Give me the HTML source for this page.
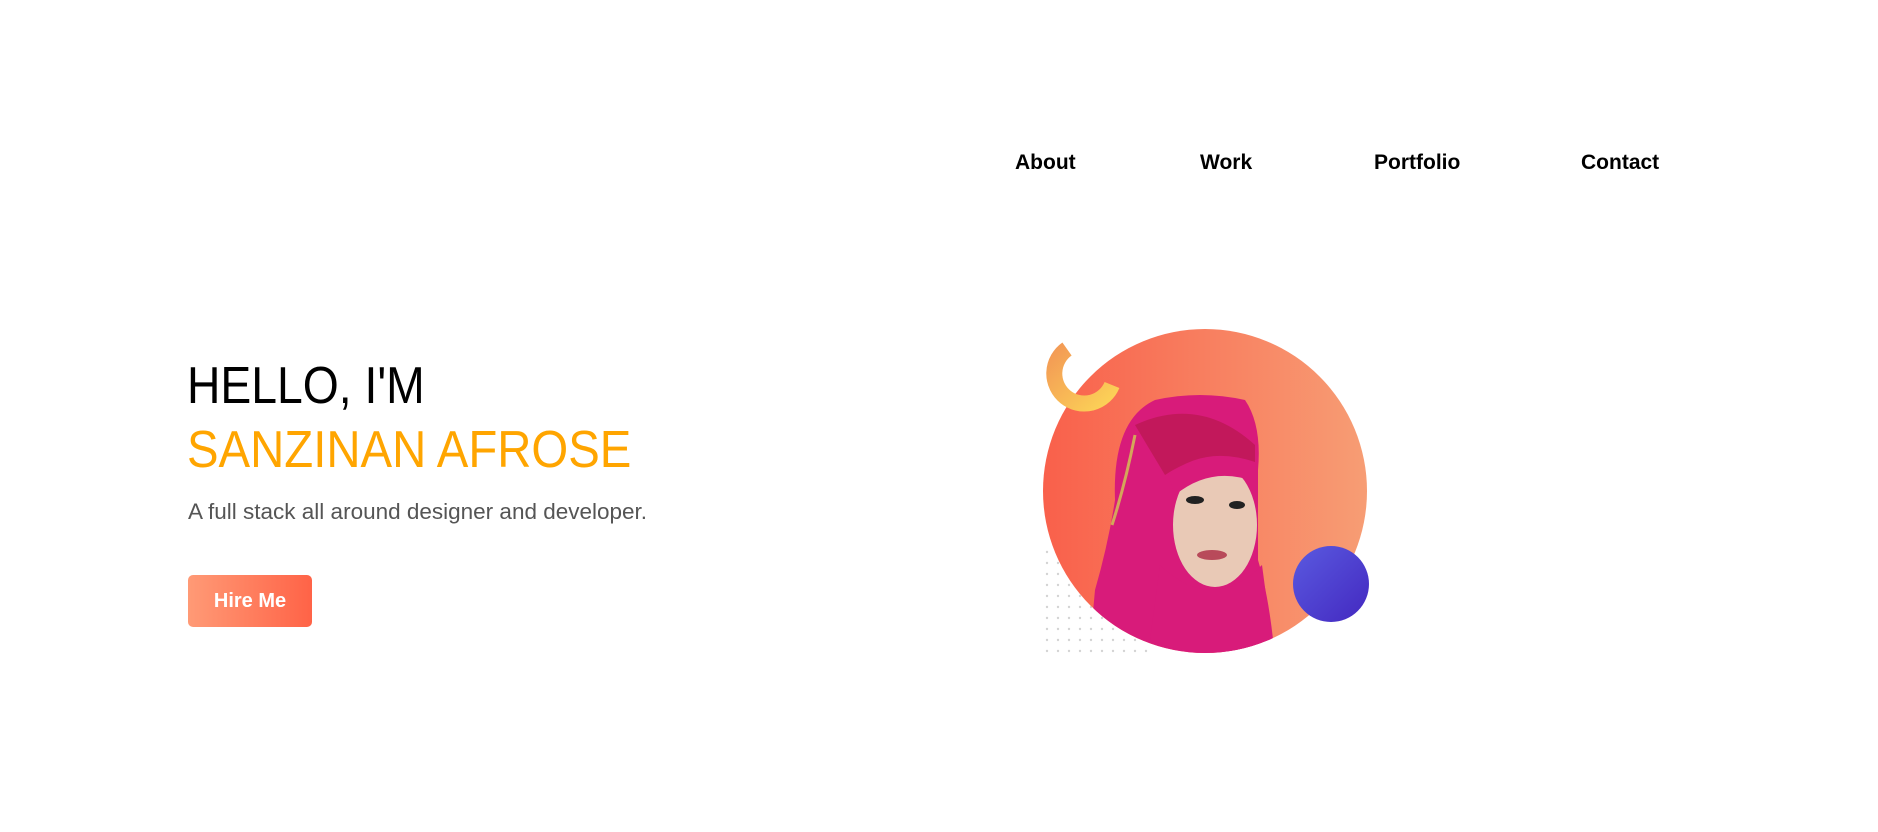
<!DOCTYPE html>
<html><head><meta charset="utf-8"><style>
body{margin:0;width:1878px;height:832px;background:#fff;position:relative;overflow:hidden;font-family:"Liberation Sans",sans-serif}
.a{position:absolute;white-space:nowrap}
.nav{font-size:21px;font-weight:bold;color:#000;top:151px}
</style></head><body>
<div class="a nav" style="left:1015px">About</div>
<div class="a nav" style="left:1200px">Work</div>
<div class="a nav" style="left:1374px">Portfolio</div>
<div class="a nav" style="left:1581px">Contact</div>

<div class="a" style="left:187px;top:356px;font-size:52px;color:#000;transform:scaleX(0.89);transform-origin:0 0">HELLO, I'M</div>
<div class="a" style="left:187px;top:420px;font-size:52px;color:#ffa500;transform:scaleX(0.91);transform-origin:0 0">SANZINAN AFROSE</div>
<div class="a" style="left:188px;top:499px;font-size:22.5px;color:#555">A full stack all around designer and developer.</div>
<div class="a" style="left:188px;top:575px;width:124px;height:52px;border-radius:5px;background:linear-gradient(90deg,#ff9a76,#ff6347);color:#fff;font-weight:bold;font-size:20px;line-height:52px;text-align:center">Hire Me</div>

<svg class="a" style="left:0;top:0" width="1878" height="832">
<defs>
<linearGradient id="g" x1="0" y1="0" x2="1" y2="0"><stop offset="0" stop-color="#f9604b"/><stop offset="1" stop-color="#f79d74"/></linearGradient>
<linearGradient id="b" x1="0" y1="0" x2="1" y2="1"><stop offset="0" stop-color="#5a5ae0"/><stop offset="1" stop-color="#4328c0"/></linearGradient>
<linearGradient id="y" x1="0" y1="0" x2="1" y2="1"><stop offset="0" stop-color="#f39a55"/><stop offset="1" stop-color="#fcd357"/></linearGradient>
<pattern id="d" width="11" height="11" patternUnits="userSpaceOnUse"><circle cx="2" cy="2" r="1.2" fill="#d4d4d4"/></pattern>
<clipPath id="c"><circle cx="1205" cy="491" r="162"/></clipPath>
</defs>
<rect x="1043" y="550" width="110" height="108" fill="url(#d)"/>
<circle cx="1205" cy="491" r="162" fill="url(#g)"/>
<g clip-path="url(#c)">
<path d="M1085 700 L1095 590 Q1108 545 1115 500 Q1112 420 1155 400 Q1200 390 1245 400 Q1262 425 1258 470 L1258 560 Q1270 600 1275 660 L1275 700Z" fill="#d81b7a"/>
<path d="M1135 425 Q1200 395 1255 445 L1255 465 Q1210 445 1165 475Z" fill="#c2185b"/>
<ellipse cx="1215" cy="525" rx="42" ry="62" fill="#e9c9b6"/>
<path d="M1168 475 Q1205 445 1255 462 L1255 482 Q1212 465 1175 495Z" fill="#d81b7a"/>
<path d="M1160 565 Q1212 615 1262 565 L1272 640 Q1210 665 1150 640Z" fill="#d81b7a"/>
<ellipse cx="1195" cy="500" rx="9" ry="4" fill="#222"/>
<ellipse cx="1237" cy="505" rx="8" ry="4" fill="#222"/>
<ellipse cx="1212" cy="555" rx="15" ry="5" fill="#b84a5a"/>
<path d="M1135 435 Q1125 485 1112 525" stroke="#d4a65a" stroke-width="3" fill="none"/>
</g>
<path d="M1067 349 A30 30 0 1 0 1112 385" stroke="url(#y)" stroke-width="16" fill="none"/>
<circle cx="1331" cy="584" r="38" fill="url(#b)"/>
</svg>
</body></html>
